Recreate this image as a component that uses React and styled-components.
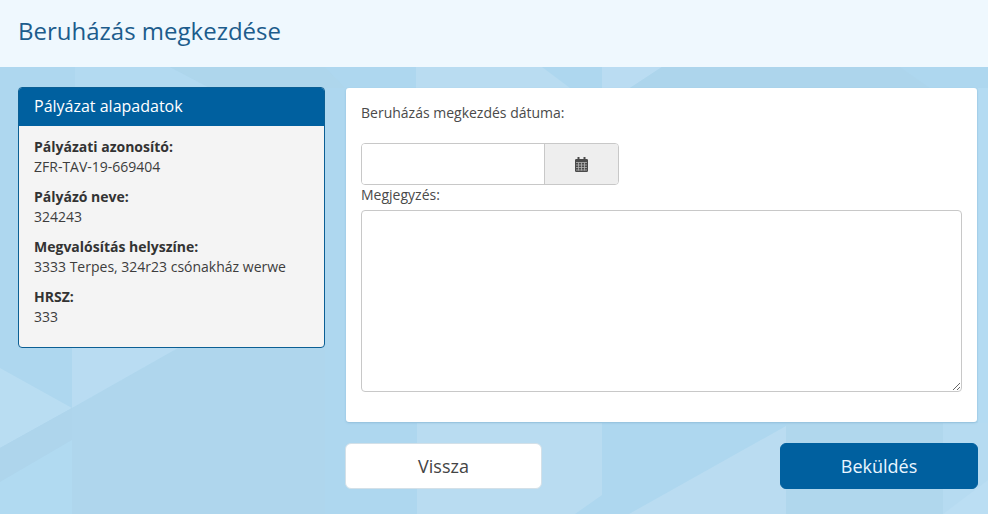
import React from "react";
import styled, { createGlobalStyle } from "styled-components";

const Global = createGlobalStyle`
  html, body { margin: 0; padding: 0; height: 100%; }
  body { font-family: "Open Sans", "Liberation Sans", sans-serif; font-size: 14px; color: #333; overflow: hidden; }
  * { box-sizing: border-box; }
`;

const Page = styled.div`
  position: relative;
  width: 988px;
  height: 514px;
  background: #aed7ef;
  overflow: hidden;
`;

const Backdrop = styled.svg`
  position: absolute;
  left: 0;
  top: 0;
  width: 988px;
  height: 514px;
`;

const TopBar = styled.header`
  position: relative;
  height: 67px;
  background: #eff8fe;
  padding: 0 18px;
  display: flex;
  align-items: center;
`;

const Title = styled.h1`
  margin: 0;
  font-size: 24px;
  line-height: 1;
  font-weight: 400;
  color: #1c5c8c;
  position: relative;
  top: -3px;
`;

const Content = styled.main`
  position: relative;
  display: grid;
  grid-template-columns: 307px 633px;
  column-gap: 20px;
  padding: 20px 10px 0 18px;
  align-items: start;
`;

const InfoPanel = styled.aside`
  background: #f4f4f4;
  border: 1px solid #0b5f94;
  border-radius: 4px;
  overflow: hidden;
  height: 261px;
`;

const PanelHeading = styled.h2`
  margin: 0;
  height: 38px;
  background: #00609f;
  color: #fff;
  font-size: 16px;
  font-weight: 400;
  line-height: 36px;
  padding: 0 15px;
`;

const PanelBody = styled.div`
  padding: 11px 15px 0;
  display: flex;
  flex-direction: column;
  gap: 10px;
`;

const Field = styled.div`
  line-height: 20px;
`;

const FieldName = styled.div`
  font-weight: 700;
  color: #333;
`;

const FieldValue = styled.div`
  color: #3d3d3d;
`;

const MainColumn = styled.div`
  display: flex;
  flex-direction: column;
`;

const FormCard = styled.section`
  margin-left: 1px;
  margin-top: 1px;
  width: 631px;
  height: 334px;
  background: #fff;
  border-radius: 3px;
  box-shadow: 0 1px 2px rgba(60, 120, 160, 0.25);
  padding: 15px;
`;

const Label = styled.label`
  display: block;
  line-height: 20px;
  color: #4a4a4a;
`;

const InputGroup = styled.div`
  display: flex;
  width: 258px;
  height: 42px;
  margin-top: 20px;
  border: 1px solid #c8c8c8;
  border-radius: 4px;
  overflow: hidden;
`;

const DateInput = styled.input`
  flex: 1;
  min-width: 0;
  border: 0;
  outline: 0;
  background: #fff;
  padding: 0 12px;
  font: inherit;
`;

const Addon = styled.span`
  width: 74px;
  border-left: 1px solid #c8c8c8;
  background: #eee;
  display: flex;
  align-items: center;
  justify-content: center;
`;

const NoteArea = styled.textarea`
  display: block;
  width: 601px;
  height: 182px;
  margin-top: 5px;
  border: 1px solid #c8c8c8;
  border-radius: 4px;
  outline: 0;
  padding: 6px 12px;
  font: inherit;
  background: #fff;
`;

const Actions = styled.div`
  display: flex;
  justify-content: space-between;
  margin-top: 21px;
  width: 633px;
`;

const Button = styled.button`
  width: ${(p) => (p.$primary ? "198px" : "197px")};
  height: 46px;
  border-radius: 6px;
  border: 1px solid ${(p) => (p.$primary ? "#00609f" : "#d3e0e8")};
  background: ${(p) => (p.$primary ? "#00609f" : "#fff")};
  color: ${(p) => (p.$primary ? "#e9f6ff" : "#444")};
  font-family: "Open Sans", "Liberation Sans", sans-serif;
  font-size: 18px;
  line-height: 1;
  padding: 0;
`;

const CalendarIcon = () => (
  <svg width="13" height="15" viewBox="0 0 13 15" aria-hidden="true">
    <path fill="#4a4a4a" d="M2.5 0h2v2h4V0h2v2h1.3A1.2 1.2 0 0 1 13 3.2v10.6a1.2 1.2 0 0 1-1.2 1.2H1.2A1.2 1.2 0 0 1 0 13.8V3.2A1.2 1.2 0 0 1 1.2 2h1.3z" />
    <path
      stroke="#b4b4b4"
      strokeWidth="0.8"
      fill="none"
      d="M1 5.5h11M1 8h11M1 10.5h11M1 13h11M3.5 5.5v8M6.5 5.5v8M9.5 5.5v8"
    />
  </svg>
);

const fields = [
  ["Pályázati azonosító:", "ZFR-TAV-19-669404"],
  ["Pályázó neve:", "324243"],
  ["Megvalósítás helyszíne:", "3333 Terpes, 324r23 csónakház werwe"],
  ["HRSZ:", "333"],
];

export default function App() {
  return (
    <Page>
      <Global />
      <Backdrop viewBox="0 0 988 514" aria-hidden="true">
        {/* top strip */}
        <polygon points="75,67 170,67 210,88 75,88" fill="#b3daf1" />
        <polygon points="170,67 325,67 345,88 210,88" fill="#aed6ec" />
        <polygon points="416,67 542,67 570,88 416,88" fill="#b9dcf1" />
        <polygon points="602,67 662,67 630,88 602,88" fill="#badcf2" />
        <polygon points="662,67 900,67 930,88 630,88" fill="#add5ec" />
        {/* lower left */}
        <polygon points="178,348 325,348 325,514 72,514 72,440 72,408" fill="#afd6ec" opacity="0.7" />
        <polygon points="72,348 178,348 72,408" fill="#b9dcf2" />
        <polygon points="0,368 72,408 0,448" fill="#b9ddf2" />
        <polygon points="72,408 0,448 0,482 72,440" fill="#aed5ec" />
        <polygon points="0,482 72,440 72,514 0,514" fill="#b1daf1" />
        {/* bottom strip */}
        <polygon points="417,423 602,423 602,495 575,514 417,514" fill="#b9dcf1" />
        <polygon points="629,514 786,426 786,514" fill="#badcf1" />
        <polygon points="786,423 943,423 943,514 786,514" fill="#b0d7ed" />
        <polygon points="943,423 988,423 988,514 943,514" fill="#b6dbf1" />
        <polygon points="943,514 988,480 988,514" fill="#bbdef3" />
        <polygon points="978,88 988,88 988,423 978,423" fill="#b4dbf2" />
      </Backdrop>
      <TopBar>
        <Title>Beruházás megkezdése</Title>
      </TopBar>
      <Content>
        <InfoPanel>
          <PanelHeading>Pályázat alapadatok</PanelHeading>
          <PanelBody>
            {fields.map(([name, value]) => (
              <Field key={name}>
                <FieldName>{name}</FieldName>
                <FieldValue>{value}</FieldValue>
              </Field>
            ))}
          </PanelBody>
        </InfoPanel>
        <MainColumn>
          <FormCard>
            <Label>Beruházás megkezdés dátuma:</Label>
            <InputGroup>
              <DateInput />
              <Addon>
                <CalendarIcon />
              </Addon>
            </InputGroup>
            <Label>Megjegyzés:</Label>
            <NoteArea />
          </FormCard>
          <Actions>
            <Button type="button">Vissza</Button>
            <Button type="button" $primary>
              Beküldés
            </Button>
          </Actions>
        </MainColumn>
      </Content>
    </Page>
  );
}
